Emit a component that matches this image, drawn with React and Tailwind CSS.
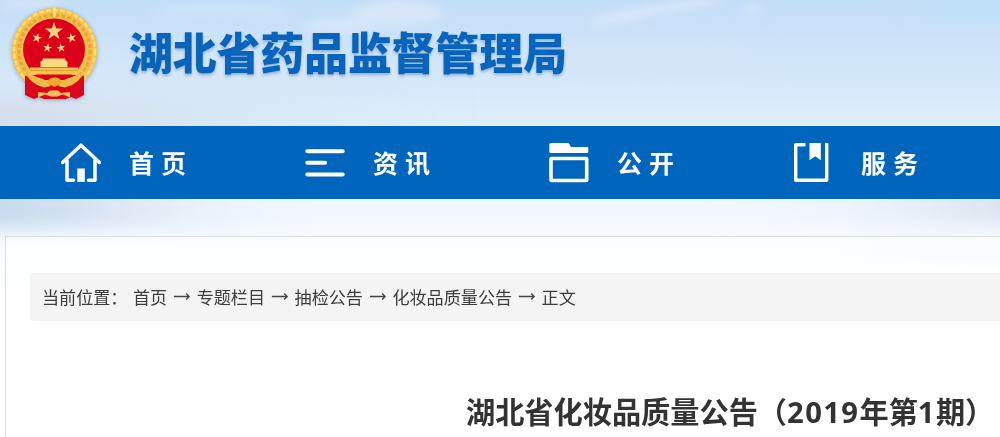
import React from 'react';

const HomeIcon = () => (
  <svg viewBox="0 0 40 40" className="w-10 h-10" fill="none" stroke="white">
    <path d="M1.5 19.5 20 2.2 38.500 19.500M6 17v20.300H12.500M34 17v20.300H27.500" strokeWidth="3.500" strokeLinejoin="round" strokeLinecap="round" />
    <path d="M16.3 25.5h7.5v13.400h-7.500z" fill="white" stroke="none" />
  </svg>
);

const ListIcon = () => (
  <svg viewBox="0 0 40 40" className="w-10 h-10" fill="none" stroke="white" strokeWidth="4" strokeLinecap="round">
    <path d="M2.3 8.2h35.4M2.3 19.8h17.8M2.3 31.4h35.4" />
  </svg>
);

const FolderIcon = () => (
  <svg viewBox="0 0 40 40" className="w-10 h-10" fill="none" stroke="white">
    <path d="M2 0h16.5q1.2 0 1.8 1l1.8 3H38q1.3 0 1.3 1.3V8.7q0 1.3-1.3 1.3H1.5Q.3 10 .3 8.7V1.5Q.3 0 2 0z" fill="white" stroke="none" />
    <rect x="2" y="15.5" width="35.7" height="22" rx=".5" strokeWidth="3.6" />
  </svg>
);

const BookIcon = () => (
  <svg viewBox="0 0 40 40" className="w-10 h-10" fill="none" stroke="white">
    <path d="M12.5 1.7H2.7v35.6h31V0" strokeWidth="3.4" strokeLinejoin="round" />
    <path d="M16.5 0h11.3v17.3l-5.5-4-5.8 4z" fill="white" stroke="none" />
  </svg>
);

const navItems = [
  { label: '首页', icon: HomeIcon },
  { label: '资讯', icon: ListIcon },
  { label: '公开', icon: FolderIcon },
  { label: '服务', icon: BookIcon },
];

const crumbs = ['首页', '专题栏目', '抽检公告', '化妆品质量公告', '正文'];

const STAR = 'M0-10 2.3-3.2 9.5-3.1 3.7 1.2 5.9 8.1 0 3.9-5.9 8.1-3.7 1.2-9.5-3.1-2.3-3.2z';

const Emblem = () => (
  <svg viewBox="8 4 92 98" className="w-[92px] h-[98px] drop-shadow-[0_1px_2px_rgba(80,110,150,0.5)]">
    {/* wheat ring */}
    <circle cx="54.5" cy="50.5" r="42.8" fill="#f4c14f" />
    <circle cx="54.5" cy="50.5" r="40.5" fill="none" stroke="#fbdc78" strokeWidth="2.5" strokeDasharray="5 2" />
    <circle cx="54.5" cy="50.5" r="35.5" fill="none" stroke="#e9a634" strokeWidth="3.5" strokeDasharray="4 2" />
    <circle cx="54" cy="49.5" r="31" fill="#dc0018" />
    {/* ribbon */}
    <path d="M25 75.5 36 79l18 6 18-6 12-3.500V95l-8 4-5-2-5 2H44l-5-2-5 2-9-4z" fill="#db061d" />
    <path d="M31 75h46l-12 5H43z" fill="#dc0018" />
    <g fill="#fbd184">
      <path d={STAR} transform="translate(54 31.5) scale(.94)" />
      <path d={STAR} transform="translate(37 38) rotate(15) scale(.52)" />
      <path d={STAR} transform="translate(71.500 38) rotate(-15) scale(.52)" />
      <path d={STAR} transform="translate(47.500 48) rotate(10) scale(.47)" />
      <path d={STAR} transform="translate(61 48) rotate(-10) scale(.47)" />
    </g>
    {/* gate */}
    <path d="M43 58.5h22l1 2.8h1.500v5.700H40.500v-5.700h1.500z" fill="#fbd980" />
    <path d="M30 67.500h48v3.500l2.500 3.500h-53L30 71z" fill="#f8c54c" />
    <path d="M30 70.500h48" stroke="#e79a35" strokeWidth="1" />
    {/* cog and crossed stalks */}
    <path d="M24 70q8 6 16 8 6 1 11 8l-7 1.500Q29 84 24 70zM85 70q-8 6-16 8-6 1-11 8l7 1.500Q80 84 85 70z" fill="#f3b945" />
    <path d="M47 83q1-5.500 7.500-5.500T62 83l-7.500 4z" fill="#f0a92f" />
    <path d="M38 92l9 1 3-2.500h8l3 2.500 9-1v5.500l-7-3-6 2h-6l-6-2-7 3z" fill="#f5bf5c" />
    <path d="M54.500 7.500v9" stroke="#ffec98" strokeWidth="2" />
  </svg>
);

// soft clouds behind the header and the water haze under the nav
const Sky = () => (
  <svg viewBox="0 0 1000 437" className="absolute inset-0 w-full h-full" preserveAspectRatio="none">
    <defs>
      <linearGradient id="sky" x1="0" y1="0" x2="0" y2="1">
        <stop offset="0" stopColor="#c3def7" />
        <stop offset=".45" stopColor="#d0e5f9" />
        <stop offset="1" stopColor="#deeefb" />
      </linearGradient>
      <linearGradient id="lower" x1="0" y1="0" x2="0" y2="1">
        <stop offset="0" stopColor="#f2f7fe" />
        <stop offset=".5" stopColor="#f8fcff" />
        <stop offset="1" stopColor="#ffffff" />
      </linearGradient>
      <linearGradient id="hazeLeft">
        <stop offset="0" stopColor="#bfd5ea" />
        <stop offset=".35" stopColor="#d5e3f1" />
        <stop offset="1" stopColor="#f2f7fe" stopOpacity="0" />
      </linearGradient>
      <linearGradient id="hazeRight">
        <stop offset="0" stopColor="#eef4fd" stopOpacity="0" />
        <stop offset="1" stopColor="#d3dcea" />
      </linearGradient>
      <linearGradient id="dusk">
        <stop offset="0" stopColor="#d2dae6" />
        <stop offset="1" stopColor="#d8e7f6" stopOpacity="0" />
      </linearGradient>
      <filter id="blur" x="-30%" y="-100%" width="160%" height="300%">
        <feGaussianBlur stdDeviation="14 9" />
      </filter>
      <filter id="wisp" x="-50%" y="-100%" width="200%" height="300%">
        <feGaussianBlur stdDeviation="6 4" />
      </filter>
    </defs>
    <rect width="1000" height="437" fill="white" />
    <rect y="199" width="1000" height="100" fill="url(#lower)" />
    <g filter="url(#blur)">
      <rect x="-60" y="185" width="410" height="44" fill="url(#hazeLeft)" />
      <rect x="720" y="185" width="340" height="40" fill="url(#hazeRight)" />
      <ellipse cx="970" cy="250" rx="120" ry="10" fill="#f3f6f8" />
    </g>
    <rect width="1000" height="126" fill="url(#sky)" />
    <g filter="url(#blur)">
      <rect x="-60" y="98" width="520" height="50" fill="url(#dusk)" />
      <ellipse cx="210" cy="75" rx="240" ry="14" fill="#d6e6f8" />
      <ellipse cx="650" cy="62" rx="120" ry="12" fill="#d3e5f5" />
      <ellipse cx="980" cy="5" rx="60" ry="10" fill="#bfe1fb" />
    </g>
    <g filter="url(#wisp)" fill="#dce9f9">
      <ellipse cx="398" cy="13" rx="46" ry="12" opacity=".8" />
      <ellipse cx="340" cy="26" rx="35" ry="7" opacity=".7" />
      <ellipse cx="30" cy="4" rx="35" ry="6" opacity=".6" />
      <ellipse cx="220" cy="10" rx="70" ry="5" opacity=".5" />
      <ellipse cx="625" cy="16" rx="38" ry="6" transform="rotate(-12 625 16)" opacity=".8" />
      <ellipse cx="685" cy="5" rx="40" ry="5" transform="rotate(-8 685 5)" opacity=".8" />
      <ellipse cx="752" cy="9" rx="12" ry="4" opacity=".7" />
    </g>
  </svg>
);

export default function App() {
  return (
    <div className="relative w-[1000px] h-[437px] overflow-hidden font-['Noto_Sans_CJK_SC',sans-serif]">
      <Sky />
      <div className="relative flex flex-col h-full">
        <header className="h-[126px] shrink-0 flex items-start pl-2 pt-1">
          <Emblem />
          <h1 className="ml-[29px] mt-4 text-[43.8px] leading-[62px] font-black text-[#0864bb] whitespace-nowrap [text-shadow:0_2px_3px_rgba(60,120,180,0.45)]">
            湖北省药品监督管理局
          </h1>
        </header>

        <nav className="h-[73px] shrink-0 flex items-center bg-[#0065bc] pl-[61px]">
          {navItems.map(({ label, icon: Icon }) => (
            <a key={label} className="w-[244px] shrink-0 flex items-center text-white">
              <Icon />
              <span className="ml-7 -mt-px text-[25px] leading-10 font-bold tracking-[7px]">{label}</span>
            </a>
          ))}
        </nav>

        <main className="mt-[37px] ml-[5px] flex-1 border-t border-l border-[#d9dee3] bg-white/50 pl-6 pt-9">
          <div className="h-12 rounded-l-sm bg-[#f4f4f4] pl-3 flex items-center text-[17.1px] text-[#3c3c3c] whitespace-nowrap">
            <span className="w-[91px]">当前位置：</span>
            {crumbs.map((c, i) => (
              <React.Fragment key={c}>
                {i > 0 && (
                  <svg viewBox="0 0 30 16" className="w-[29.500px] h-4" fill="none" stroke="#444" strokeWidth="1.4">
                    <path d="M7 7.500h15.500M19.500 4.500 22.500 7.500 19.500 10.500" />
                  </svg>
                )}
                <span>{c}</span>
              </React.Fragment>
            ))}
          </div>
          <h2 className="mt-[68px] ml-[436px] text-[29.2px] leading-[42px] font-bold text-[#333] whitespace-nowrap">
            湖北省化妆品质量公告（<span className="font-['Noto_Sans'] tracking-[1.4px]">2019</span>年第<span className="font-['Noto_Sans'] tracking-[1.4px]">1</span>期）
          </h2>
        </main>
      </div>
    </div>
  );
}
